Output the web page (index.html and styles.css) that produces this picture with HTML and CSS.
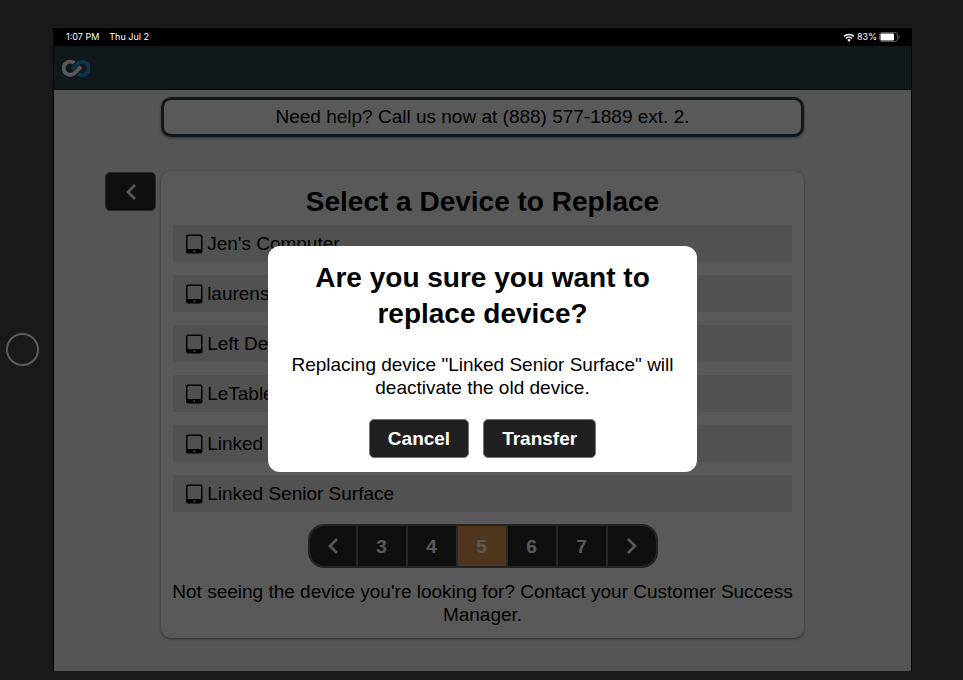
FILE: index.html
```html
<!DOCTYPE html>
<html lang="en">
<head>
  <meta charset="UTF-8" />
  <meta name="viewport" content="width=device-width, initial-scale=1.0"/>
  <title>Select a Device to Replace</title>
  <link rel="stylesheet" href="styles.css">
</head>
<body>
  <svg class="icon-defs" width="0" height="0" aria-hidden="true">
    <symbol id="tablet" viewBox="0 0 18 20">
      <path fill-rule="evenodd" d="M3 .5h12.500a2 2 0 0 1 2 2v15a2 2 0 0 1-2 2H3a2 2 0 0 1-2-2v-15a2 2 0 0 1 2-2zM3.300 2a.8.8 0 0 0-.8.8V15H16V2.800a.8.8 0 0 0-.8-.8zM9.250 16.200a1 1 0 1 0 0 2a1 1 0 0 0 0-2z"/>
    </symbol>
    <symbol id="left" viewBox="0 0 12 18">
      <path d="M10 2L3 9l7 7" fill="none" stroke="currentColor" stroke-width="2.600"/>
    </symbol>
    <symbol id="right" viewBox="0 0 12 18">
      <path d="M2 2l7 7-7 7" fill="none" stroke="currentColor" stroke-width="2.600"/>
    </symbol>
  </svg>

  <div class="tablet">
    <div class="home-side"><span class="home-button"></span></div>
    <div class="screen">
      <div class="status-bar">
        <span>1:07 PM</span>
        <span>Thu Jul 2</span>
        <span class="status-right">
          <svg width="12" height="9" viewBox="0 0 12 9" aria-hidden="true">
            <path d="M1 3.500a7.200 7.200 0 0 1 10 0M2.900 5.400a4.500 4.500 0 0 1 6.200 0" fill="none" stroke="#fff" stroke-width="1.400"/>
            <path d="M4.300 6.900a2.500 2.500 0 0 1 3.400 0L6 8.700z" fill="#fff"/>
          </svg>
          83%
          <svg width="21" height="10" viewBox="0 0 21 10" aria-hidden="true">
            <rect x=".5" y=".5" width="18" height="9" rx="2.500" fill="none" stroke="#555"/>
            <rect x="1.500" y="1.500" width="13.500" height="7" rx="1" fill="#fff"/>
            <path d="M19.500 3.200c1.600.8 1.600 2.800 0 3.600z" fill="#555"/>
          </svg>
        </span>
      </div>

      <div class="app">
        <header class="app-header">
          <svg class="logo" width="28" height="18" viewBox="0 0 28 18" role="img" aria-label="Linked Senior">
            <path d="M10 10.500L15 5.500A6.600 6.600 0 1 1 16 14.600" fill="none" stroke="#1e9bd6" stroke-width="3.800"/>
            <path d="M13.500 13.200L19 7.600" fill="none" stroke="#2e464e" stroke-width="6"/>
            <path d="M12.300 4A6.600 6.600 0 1 0 13.200 13.500L19 7.600" fill="none" stroke="#fff" stroke-width="3.800"/>
          </svg>
        </header>

        <main class="content">
          <div class="help">Need help? Call us now at (888) 577-1889 ext. 2.</div>
          <div class="row">
            <button class="btn back" aria-label="Back"><svg class="chevron"><use href="#left"/></svg></button>
            <section class="card">
              <h1>Select a Device to Replace</h1>
              <ul class="devices">
                <li><svg class="device-icon"><use href="#tablet"/></svg>Jen's Computer</li>
                <li><svg class="device-icon"><use href="#tablet"/></svg>laurens</li>
                <li><svg class="device-icon"><use href="#tablet"/></svg>Left De</li>
                <li><svg class="device-icon"><use href="#tablet"/></svg>LeTable</li>
                <li><svg class="device-icon"><use href="#tablet"/></svg>Linked</li>
                <li><svg class="device-icon"><use href="#tablet"/></svg>Linked Senior Surface</li>
              </ul>
              <nav class="pager">
                <button aria-label="Previous"><svg class="chevron"><use href="#left"/></svg></button>
                <button>3</button>
                <button>4</button>
                <button class="active">5</button>
                <button>6</button>
                <button>7</button>
                <button aria-label="Next"><svg class="chevron"><use href="#right"/></svg></button>
              </nav>
              <p class="note">Not seeing the device you're looking for? Contact your Customer Success Manager.</p>
            </section>
          </div>
        </main>

        <!-- confirm dialog -->
        <div class="overlay">
          <div class="modal" role="dialog" aria-labelledby="modal-title">
            <h2 id="modal-title">Are you sure you want to replace device?</h2>
            <p>Replacing device "Linked Senior Surface" will deactivate the old device.</p>
            <div class="actions">
              <button class="btn">Cancel</button>
              <button class="btn">Transfer</button>
            </div>
          </div>
        </div>
      </div>
    </div>
  </div>
</body>
</html>
```

FILE: styles.css
```css
* {
  box-sizing: border-box;
}
body {
  margin: 0;
  background: #191919;
  color: #000;
  font-family: "Liberation Sans", Arial, sans-serif;
  font-size: 19px;
  line-height: 23px;
}
h1, h2, p, ul {
  margin: 0;
  padding: 0;
}
button {
  font: inherit;
  font-weight: bold;
  color: #fff;
  cursor: pointer;
}
.icon-defs {
  position: absolute;
}
.tablet {
  display: flex;
  min-height: 100vh;
  padding: 28px 51px 9px 0;
}
.home-side {
  display: flex;
  align-items: center;
  justify-content: center;
  flex: 0 0 53px;
  padding-right: 8px;
}
.home-button {
  width: 33px;
  height: 33px;
  border: 2px solid #5c5c5c;
  border-radius: 50%;
}
.screen {
  display: flex;
  flex-direction: column;
  flex: 1;
  border: 1px solid #000;
  border-width: 0 1px;
}
.status-bar {
  display: flex;
  align-items: center;
  gap: 10px;
  height: 18px;
  padding: 0 11px 0 12px;
  background: #000;
  color: #fff;
  font-family: Inter, "Liberation Sans", sans-serif;
  font-size: 9px;
  line-height: 18px;
}
.status-right {
  display: flex;
  align-items: center;
  gap: 2px;
  margin-left: auto;
}
.app {
  position: relative;
  flex: 1;
  background: #f3f3f3;
}
.app-header {
  display: flex;
  align-items: center;
  height: 44px;
  padding: 0 8px;
  background: #2e464e;
  border-bottom: 1px solid #222;
}
.content {
  width: 75%;
  margin: 0 auto;
  padding: 7px 0 32px;
}
.help {
  padding: 6px;
  border: 3px solid #2e464e;
  border-radius: 10px;
  background: #fff;
  box-shadow: 0 1px 3px rgba(0,0,0,0.4);
  line-height: 22px;
  text-align: center;
}
.row {
  position: relative;
  margin-top: 34px;
}
.btn {
  height: 39px;
  padding: 0 18px;
  border: 1px solid #777;
  border-radius: 5px;
  background: #202020;
}
.back {
  position: absolute;
  top: 1px;
  right: 100%;
  width: 51px;
  margin-right: 5px;
  padding: 0;
  background: #2d2d2d;
}
.chevron {
  display: block;
  width: 12px;
  height: 18px;
  margin: 0 auto;
}
.card {
  padding: 12px 6px;
  border-radius: 10px;
  background: #fff;
  box-shadow: 0 1px 3px rgba(0,0,0,0.5);
  text-align: center;
}
h1, h2 {
  font-size: 28px;
  line-height: 36px;
}
h1 {
  margin: 1px 0 5px;
}
.devices {
  display: flex;
  flex-direction: column;
  gap: 13px;
  margin: 0 6px;
  list-style: none;
  text-align: left;
}
.devices li {
  display: flex;
  align-items: center;
  gap: 4px;
  height: 37px;
  padding: 0 12px;
  background: #e8e8e8;
}
.device-icon {
  width: 18px;
  height: 20px;
}
.pager {
  display: flex;
  width: fit-content;
  margin: 12px auto;
  border: 2px solid #666;
  border-radius: 16px;
  overflow: hidden;
}
.pager button {
  width: 50px;
  height: 40px;
  padding: 0;
  border: 0;
  border-right: 2px solid #777;
  background: #2d2d2d;
}
.pager button:first-child,
.pager button:last-child {
  width: 48px;
}
.pager button:last-child {
  border-right: 0;
}
.pager .active {
  background: #e2974d;
}
.overlay {
  position: absolute;
  inset: 0;
  display: flex;
  align-items: center;
  justify-content: center;
  background: rgba(0,0,0,0.65);
}
.modal {
  width: 50%;
  padding: 14px 16px;
  border-radius: 12px;
  background: #fff;
  text-align: center;
}
.modal p {
  margin-top: 21px;
}
.actions {
  display: flex;
  justify-content: center;
  gap: 14px;
  margin-top: 20px;
}
```
